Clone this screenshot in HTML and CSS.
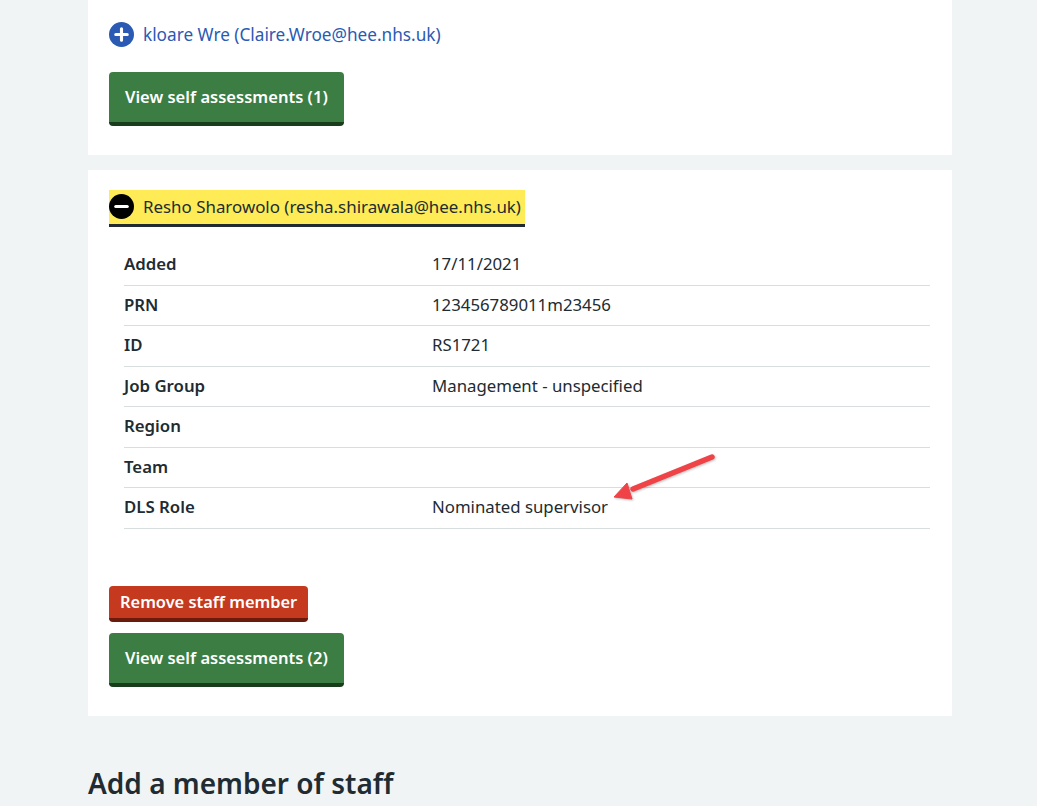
FILE: index.html
```html
<!DOCTYPE html>
<html lang="en">
<head>
    <meta charset="UTF-8">
    <title>My staff</title>
    <link rel="stylesheet" href="styles.css">
</head>
<body>

<div class="page">
    <div class="card card-first">
        <div class="summary">
            <svg class="toggle-icon" viewBox="0 0 24 24" aria-hidden="true">
                <circle cx="12" cy="12" r="12" fill="#2a5ab3"/>
                <path d="M12 6.5v11M6.5 12h11" stroke="#fff" stroke-width="3" stroke-linecap="round"/>
            </svg>
            <span>kloare Wre (Claire.Wroe@hee.nhs.uk)</span>
        </div>
        <a class="button button-green button-first">View self assessments (1)</a>
    </div>

    <div class="card card-open">
        <div class="summary summary-open">
            <svg class="toggle-icon" viewBox="0 0 24 24" aria-hidden="true">
                <circle cx="12" cy="12" r="12" fill="#000"/>
                <path d="M6.5 12h11" stroke="#fff" stroke-width="3" stroke-linecap="round"/>
            </svg>
            <span>Resho Sharowolo (resha.shirawala@hee.nhs.uk)</span>
        </div>

        <dl class="details">
            <div class="row"><dt>Added</dt><dd>17/11/2021</dd></div>
            <div class="row"><dt>PRN</dt><dd>123456789011m23456</dd></div>
            <div class="row"><dt>ID</dt><dd>RS1721</dd></div>
            <div class="row"><dt>Job Group</dt><dd>Management - unspecified</dd></div>
            <div class="row"><dt>Region</dt><dd></dd></div>
            <div class="row"><dt>Team</dt><dd></dd></div>
            <div class="row"><dt>DLS Role</dt><dd>Nominated supervisor</dd></div>
        </dl>

        <a class="button button-red">Remove staff member</a>
        <a class="button button-green">View self assessments (2)</a>
    </div>

    <h2>Add a member of staff</h2>
</div>

<svg class="arrow" viewBox="0 0 110 56" aria-hidden="true">
    <path d="M101 7 L22 39" stroke="#ef4347" stroke-width="5.5" stroke-linecap="round"/>
    <path d="M3 47 L16 33 L21 49 Z" fill="#ef4347" stroke="#ef4347" stroke-linejoin="round"/>
</svg>

</body>
</html>
```

FILE: styles.css
```css
body {
    font-family: 'Noto Sans', 'Open Sans', sans-serif;
    margin: 0;
    padding: 0;
    background-color: #f0f4f5;
    color: #212b32;
    height: 806px;
    overflow: hidden;
    position: relative;
}
.page {
    width: 864px;
    margin-left: 88px;
}
.card {
    background-color: #ffffff;
    padding: 0 22px 0 21px;
}
.card-first {
    padding-top: 21px;
    height: 134px;
    margin-bottom: 15px;
}
.card-open {
    padding-top: 20px;
    height: 526px;
}
.summary {
    display: inline-flex;
    align-items: center;
    gap: 9px;
    color: #2a5ab3;
    font-size: 17.2px;
    height: 26px;
    white-space: nowrap;
}
.summary-open {
    color: #212b32;
    background-color: #ffeb55;
    border-bottom: 3px solid #212b32;
    font-size: 16.9px;
    height: 32px;
    padding: 0 4px 2px 0;
}
.toggle-icon {
    width: 25px;
    height: 25px;
    flex-shrink: 0;
}
.details {
    margin: 18px 0 57px 15px;
    font-size: 16.8px;
}
.row {
    display: flex;
    align-items: center;
    height: 40.5px;
    box-sizing: border-box;
    padding-bottom: 2px;
    border-bottom: 1px solid #d8dde0;
}
dt {
    width: 308px;
    font-weight: 600;
}
dd {
    margin: 0;
}
.button {
    display: table;
    box-sizing: border-box;
    height: 54px;
    line-height: 50px;
    padding: 0 16px;
    border-radius: 4px;
    color: #ffffff;
    font-size: 16.55px;
    font-weight: 600;
    white-space: nowrap;
}
.button-first {
    margin-top: 20px;
}
.button-green {
    background-color: #3b7d42;
    border-bottom: 4px solid #173d1c;
}
.button-red {
    background-color: #c5391f;
    border-bottom: 4px solid #6b1a0c;
    height: 36px;
    line-height: 32px;
    padding: 0 11px;
    font-size: 16.4px;
    margin-bottom: 11px;
}
h2 {
    margin: 47px 0 0;
    font-size: 28px;
    font-weight: 600;
    line-height: 40px;
}
.arrow {
    position: absolute;
    left: 611px;
    top: 450px;
    width: 110px;
    height: 56px;
    filter: drop-shadow(1px 1px 1px rgba(0, 0, 0, 0.25));
}
```
